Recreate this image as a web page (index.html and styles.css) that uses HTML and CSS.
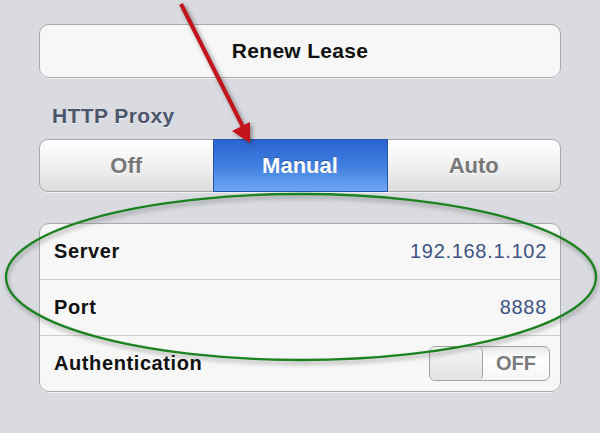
FILE: index.html
```html
<!DOCTYPE html>
<html lang="en">
<head>
    <meta charset="UTF-8">
    <meta name="viewport" content="width=device-width, initial-scale=1.0">
    <title>HTTP Proxy</title>
    <link rel="stylesheet" href="styles.css">
</head>
<body>
    <div class="settings">
        <div class="renew-btn">Renew Lease</div>

        <div class="group-title">HTTP Proxy</div>
        <div class="segmented">
            <div class="segment">Off</div>
            <div class="segment active">Manual</div>
            <div class="segment">Auto</div>
        </div>

        <div class="group">
            <div class="row">
                <span class="row-label">Server</span>
                <span class="row-value">192.168.1.102</span>
            </div>
            <div class="row">
                <span class="row-label">Port</span>
                <span class="row-value">8888</span>
            </div>
            <div class="row">
                <span class="row-label">Authentication</span>
                <div class="switch">
                    <div class="switch-knob"></div>
                    <div class="switch-text">OFF</div>
                </div>
            </div>
        </div>
    </div>

    <!-- annotations drawn over the screenshot -->
    <svg class="marks" width="600" height="433" viewBox="0 0 600 433">
        <ellipse class="ring" cx="301" cy="277" rx="295" ry="83" />
        <g class="arrow">
            <line x1="181" y1="4" x2="243" y2="127" />
            <polygon points="250,143 232,131 250,122" />
        </g>
    </svg>
</body>
</html>
```

FILE: styles.css
```css
body {
    margin: 0;
    width: 600px;
    height: 433px;
    overflow: hidden;
    position: relative;
    background-color: #d9dbe0;
    font-family: "Liberation Sans", Arial, sans-serif;
}

.settings {
    padding: 24px 39px 0 39px;
}

.renew-btn {
    height: 52px;
    line-height: 52px;
    text-align: center;
    font-size: 21px;
    font-weight: bold;
    letter-spacing: 0.3px;
    color: #111;
    background-color: #f7f7f7;
    border: 1px solid #a8aaaf;
    border-radius: 10px;
    box-shadow: 0 1px 0 #eef0f3;
}

.group-title {
    margin: 26px 0 0 13px;
    height: 24px;
    line-height: 24px;
    font-size: 21px;
    font-weight: bold;
    letter-spacing: 0.4px;
    color: #4c566b;
    text-shadow: 0 1px 0 #f2f3f5;
}

.segmented {
    margin-top: 11px;
    height: 53px;
    display: flex;
    border-radius: 9px;
    box-shadow: 0 1px 0 #eef0f3;
}

.segment {
    flex: 1;
    display: flex;
    align-items: center;
    justify-content: center;
    font-size: 22px;
    font-weight: bold;
    color: #777;
    text-shadow: 0 1px 0 #fff;
    background: linear-gradient(#ffffff, #f1f1f1 50%, #dcdcdc);
    border: 1px solid #a5a7ab;
    box-sizing: border-box;
}

.segment:first-child {
    border-radius: 9px 0 0 9px;
    border-right: none;
}

.segment:last-child {
    border-radius: 0 9px 9px 0;
    border-left: none;
}

.segment.active {
    flex: 0 0 175px;
    color: #fff;
    text-shadow: 0 -1px 0 #2c5aa8;
    background: linear-gradient(#2a64d2, #3f7fe0 50%, #6ea7f1);
    border-color: #2453a8;
}

.group {
    margin-top: 31px;
    background-color: #f7f7f7;
    border: 1px solid #a8aaaf;
    border-radius: 10px;
    box-shadow: 0 1px 0 #eef0f3;
}

.row {
    height: 55px;
    display: flex;
    align-items: center;
    justify-content: space-between;
    padding: 0 10px 0 14px;
    border-top: 1px solid #cbccd0;
}

.row:first-child {
    border-top: none;
}

.row-label {
    font-size: 20px;
    font-weight: bold;
    letter-spacing: 0.6px;
    color: #111;
}

.row-value {
    margin-right: 3px;
    font-size: 20px;
    letter-spacing: 0.7px;
    color: #3d5385;
}

.switch {
    width: 119px;
    height: 33px;
    display: flex;
    border: 1px solid #a3a3a3;
    border-radius: 6px;
    background: linear-gradient(#e9e9e9, #ffffff 40%, #f6f6f6);
    overflow: hidden;
}

.switch-knob {
    width: 52px;
    border-right: 1px solid #a3a3a3;
    border-radius: 5px;
    background: linear-gradient(#f4f4f4, #e3e3e3);
}

.switch-text {
    flex: 1;
    display: flex;
    align-items: center;
    justify-content: center;
    font-size: 20px;
    font-weight: bold;
    color: #7b7b7b;
}

.marks {
    position: absolute;
    top: 0;
    left: 0;
}

.ring {
    fill: none;
    stroke: #1a821e;
    stroke-width: 2.3;
    filter: drop-shadow(1px 3px 2px rgba(60, 60, 60, 0.45));
}

.arrow {
    filter: drop-shadow(2px 2px 2px rgba(40, 40, 40, 0.5));
}

.arrow line {
    stroke: #c3141b;
    stroke-width: 4;
}

.arrow polygon {
    fill: #c3141b;
}
```
